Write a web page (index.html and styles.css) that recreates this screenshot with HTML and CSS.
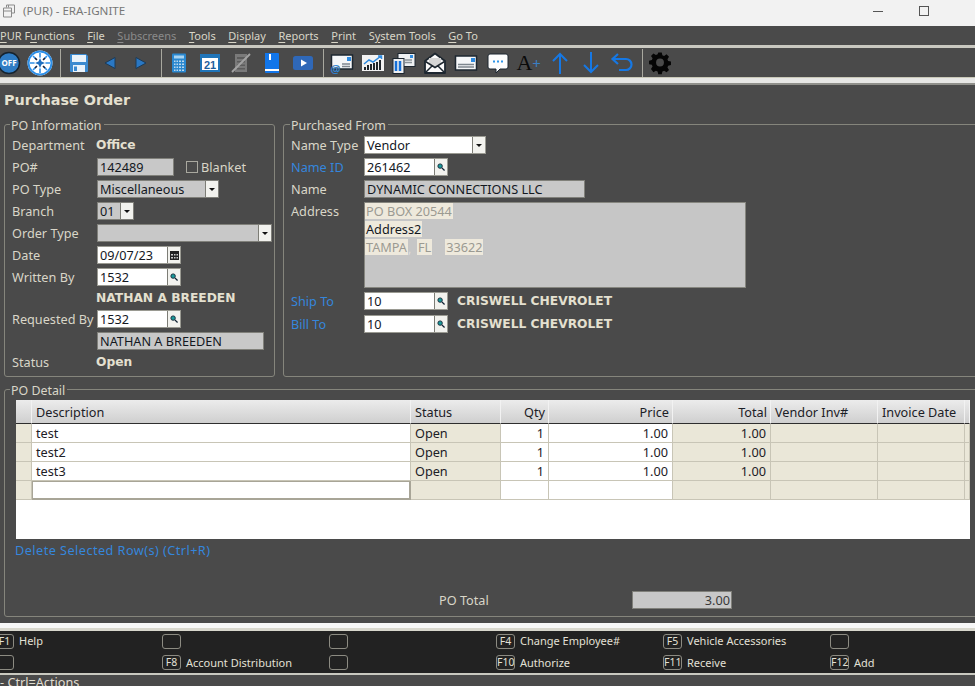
FILE: index.html
```html
<!DOCTYPE html>
<html lang="en">
<head>
<meta charset="utf-8">
<title>(PUR) - ERA-IGNITE</title>
<link rel="stylesheet" href="styles.css">
</head>
<body>
<header class="titlebar">
  <svg class="app-icon" width="14" height="14" viewBox="0 0 14 14"><path d="M4.5 3.5V1h8v8H10M1.5 4h8v9h-8zM1.5 7h8M6.5 1v2.500" fill="none" stroke="#8a8a8a"/></svg>
  <span class="app-title">(PUR) - ERA-IGNITE</span>
  <div class="win-buttons">
    <span class="win-min"></span>
    <span class="win-max"></span>
  </div>
</header>
<nav class="menu">
  <span><u>P</u>UR F<u>u</u>nctions</span><span><u>F</u>ile</span><span class="off"><u>S</u>ubscreens</span><span><u>T</u>ools</span><span><u>D</u>isplay</span><span><u>R</u>eports</span><span><u>P</u>rint</span><span>S<u>y</u>stem Tools</span><span><u>G</u>o To</span>
</nav>
<div class="toolbar">
  <div class="tool-group first">
    <span class="tool"><svg width="24" height="24" viewBox="0 0 24 24"><circle cx="12" cy="12" r="10.500" fill="#2f7cc4" stroke="#16232e" stroke-width="1.500"/><text x="12" y="15" class="svg-off">OFF</text></svg></span>
    <span class="tool"><svg width="26" height="26" viewBox="0 0 26 26"><circle cx="13" cy="13" r="12.500" fill="#fff"/><circle cx="13" cy="13" r="11.500" fill="none" stroke="#2d8fe8" stroke-width="2"/><path d="M13 3v20M3 13h20M6 6l14 14M20 6L6 20" stroke="#2d8fe8" stroke-width="1.600"/><circle cx="13" cy="13" r="5.500" fill="#fff"/><path d="M13 8l1.500 3.500L18 13l-3.500 1.500L13 18l-1.500-3.500L8 13l3.500-1.500z" fill="#1f6fc0"/><path d="M8 8l2 2M18 8l-2 2M8 18l2-2M18 18l-2-2" stroke="#223" stroke-width="1.500"/></svg></span>
  </div>
  <i class="sep"></i>
  <div class="tool-group">
    <span class="tool"><svg width="24" height="24" viewBox="0 0 24 24"><path d="M4 3h15l2 2v15a1 1 0 0 1-1 1H4a1 1 0 0 1-1-1V4a1 1 0 0 1 1-1z" fill="#3b8ad0"/><rect x="5" y="4" width="14" height="7" fill="#e9f2fa"/><rect x="6" y="14" width="12" height="7" fill="#e9f2fa"/><rect x="7" y="15.500" width="3" height="4.500" fill="#3b8ad0"/></svg></span>
    <span class="tool"><svg width="24" height="24" viewBox="0 0 24 24"><path d="M17 6.500v11L7 12z" fill="#2a78c4" stroke="#1a3a58"/></svg></span>
    <span class="tool"><svg width="24" height="24" viewBox="0 0 24 24"><path d="M7 6.500v11L17 12z" fill="#2a78c4" stroke="#1a3a58"/></svg></span>
  </div>
  <i class="sep"></i>
  <div class="tool-group">
    <span class="tool"><svg width="24" height="24" viewBox="0 0 24 24"><rect x="5" y="2.500" width="14" height="19" rx="1" fill="#2a88d0"/><rect x="7" y="4.500" width="10" height="3" fill="#a8d4f2"/><path d="M7 9.500h10v1.500H7zM7 12.500h10V14H7zM7 15.500h10V17H7zM7 18.500h10V20H7z" fill="#bcd8ee"/><path d="M9 9v11M11.500 9v11M14.500 9v11" stroke="#2a88d0" stroke-width="1"/></svg></span>
    <span class="tool"><svg width="24" height="24" viewBox="0 0 24 24"><rect x="2" y="3" width="20" height="18" fill="#1f74b8"/><rect x="4" y="7" width="16" height="12" fill="#fff"/><text x="12" y="17.500" class="svg-cal">21</text></svg></span>
    <span class="tool"><svg width="24" height="24" viewBox="0 0 24 24"><rect x="6" y="3" width="12" height="18" fill="#7a7a7a"/><path d="M8 6h8v2H8zM8 10h8v1.500H8zM8 13.500h8V15H8zM8 17h8v1.500H8z" fill="#5c5c5c"/><path d="M3 21L21 3" stroke="#a3a3a3" stroke-width="2"/></svg></span>
    <span class="tool"><svg width="24" height="24" viewBox="0 0 24 24"><path d="M5 2h13a1 1 0 0 1 1 1v19H6a1 1 0 0 1-1-1z" fill="#1276ea"/><rect x="5" y="18" width="14" height="2" fill="#fff"/><rect x="9" y="3" width="2" height="6" fill="#fff"/></svg></span>
    <span class="tool"><svg width="24" height="24" viewBox="0 0 24 24"><rect x="2" y="5" width="20" height="14" rx="2.500" fill="#2f68b8"/><path d="M10 8.500v7l6-3.500z" fill="#fff"/></svg></span>
  </div>
  <i class="sep"></i>
  <div class="tool-group wide">
    <span class="tool"><svg width="24" height="24" viewBox="0 0 24 24"><rect x="1.500" y="4" width="21" height="14" fill="#f4f6f8" stroke="#1d2730" stroke-width="1.500"/><rect x="17" y="6" width="4" height="4" fill="#2f8be0"/><path d="M12 13h8M12 15.500h8" stroke="#7d868e" stroke-width="1.300"/><text x="5.500" y="21.500" class="svg-at">@</text></svg></span>
    <span class="tool"><svg width="24" height="24" viewBox="0 0 24 24"><rect x="1" y="4" width="22" height="16" fill="#f2f2f2"/><path d="M4 19v-3M7 19v-5M10 19v-6M13 19v-7M16 19v-8M19 19V9" stroke="#20262c" stroke-width="2"/><path d="M3 13l5-4 4 2 8-6M17 5h3.500v3" fill="none" stroke="#2f8be0" stroke-width="1.500"/></svg></span>
    <span class="tool"><svg width="24" height="24" viewBox="0 0 24 24"><rect x="6" y="2.500" width="17" height="13" fill="#eef0f2" stroke="#1d2730"/><rect x="18" y="4" width="3" height="3" fill="#2f8be0"/><path d="M13 9h7M13 11.500h7" stroke="#8a9299" stroke-width="1.300"/><rect x="1" y="7.500" width="11" height="15" fill="#eef0f2" stroke="#1d2730"/><path d="M4 10v10M8 10v10" stroke="#1670d8" stroke-width="2.500"/></svg></span>
    <span class="tool"><svg width="24" height="24" viewBox="0 0 24 24"><path d="M2 10L12 2.500 22 10v12H2z" fill="#fbfbfb" stroke="#1d2730" stroke-width="1.800" stroke-linejoin="round"/><path d="M6 7h12v6l-6 3-6-3z" fill="#d6d6d6"/><path d="M2.500 10.500l9.500 6 9.500-6M2.500 21.500l7-7M21.500 21.500l-7-7" fill="none" stroke="#1d2730" stroke-width="1.500"/></svg></span>
    <span class="tool"><svg width="24" height="24" viewBox="0 0 24 24"><rect x="1.500" y="5" width="21" height="14" fill="#f4f6f8" stroke="#1d2730" stroke-width="1.500"/><rect x="17" y="7" width="4" height="4" fill="#2f8be0"/><path d="M4 13.500h16M4 16h16" stroke="#7d868e" stroke-width="1.500"/></svg></span>
    <span class="tool"><svg width="24" height="24" viewBox="0 0 24 24"><path d="M4 3h16a2 2 0 0 1 2 2v11a2 2 0 0 1-2 2h-6l-4 4v-4H4a2 2 0 0 1-2-2V5a2 2 0 0 1 2-2z" fill="#fdfdfd" stroke="#1d2730"/><path d="M7 10.500h2M11 10.500h2M15 10.500h2" stroke="#2f96ea" stroke-width="2"/></svg></span>
    <span class="tool tool-text"><span class="a-big">A</span><span class="a-plus">+</span></span>
    <span class="tool"><svg width="24" height="24" viewBox="0 0 24 24"><path d="M12 23V3M5 10l7-7 7 7" fill="none" stroke="#1678e4" stroke-width="2"/></svg></span>
    <span class="tool"><svg width="24" height="24" viewBox="0 0 24 24"><path d="M12 1v20M5 14l7 7 7-7" fill="none" stroke="#1678e4" stroke-width="2"/></svg></span>
    <span class="tool"><svg width="24" height="24" viewBox="0 0 24 24"><path d="M8 3L2.500 8 8 13M3 8h13a5.500 5.500 0 0 1 0 11h-7" fill="none" stroke="#1678e4" stroke-width="2.200"/></svg></span>
  </div>
  <i class="sep"></i>
  <div class="tool-group">
    <span class="tool"><svg width="24" height="24" viewBox="0 0 24 24"><path fill="#050505" fill-rule="evenodd" d="M10 1h4l.7 3.200 2 .8L19.500 3.200l2.800 2.800-1.800 2.800.8 2 3.200.700v4l-3.200.700-.8 2 1.800 2.800-2.800 2.800-2.800-1.800-2 .8-.7 3.200h-4l-.7-3.200-2-.8-2.800 1.800L1.700 20l1.800-2.800-.8-2L-.5 14.500v-4l3.200-.7.8-2L1.700 5l2.800-2.800 2.800 1.800 2-.8zM12 8a4.500 4.500 0 1 0 0 9 4.500 4.500 0 0 0 0-9z" transform="translate(.5 .5) scale(.875)"/></svg></span>
  </div>
</div>
<div class="toolbar-edge"></div>

<main class="content">
  <h1 class="page-title">Purchase Order</h1>
  <div class="top-panels">
    <fieldset class="panel panel-info">
      <legend>PO Information</legend>
      <div class="row"><span class="lbl">Department</span><strong class="val">Office</strong></div>
      <div class="row"><span class="lbl">PO#</span><span class="fld ro w-po">142489</span><span class="check"></span><span class="lbl-plain">Blanket</span></div>
      <div class="row"><span class="lbl">PO Type</span><span class="fld ro w-type">Miscellaneous<b class="drop"></b></span></div>
      <div class="row"><span class="lbl">Branch</span><span class="fld ro w-branch">01<b class="drop"></b></span></div>
      <div class="row"><span class="lbl">Order Type</span><span class="fld ro w-order"><b class="drop"></b></span></div>
      <div class="row"><span class="lbl">Date</span><span class="fld w-id">09/07/23<b class="btn"><svg width="9" height="9" viewBox="0 0 9 9"><path d="M0 0h9v9H0z" fill="#222"/><path d="M1 3h2v1.500H1zM4 3h1.500v1.500H4zM6.500 3h1.500v1.500H6.500zM1 6h2v1.500H1zM4 6h1.500v1.500H4zM6.500 6h1.500v1.500H6.500z" fill="#ccc"/></svg></b></span></div>
      <div class="row"><span class="lbl">Written By</span><span class="fld w-id">1532<b class="btn"><svg class="lens" viewBox="0 0 9 9"><circle cx="3.500" cy="3.500" r="2.500" fill="#1a9a9a" stroke="#123"/><path d="M5.500 5.500L8.500 8.500" stroke="#123" stroke-width="1.500"/></svg></b></span></div>
      <div class="row row-s"><span class="lbl"></span><strong class="val">NATHAN A BREEDEN</strong></div>
      <div class="row"><span class="lbl">Requested By</span><span class="fld w-id">1532<b class="btn"><svg class="lens" viewBox="0 0 9 9"><circle cx="3.500" cy="3.500" r="2.500" fill="#1a9a9a" stroke="#123"/><path d="M5.500 5.500L8.500 8.500" stroke="#123" stroke-width="1.500"/></svg></b></span></div>
      <div class="row row-m"><span class="lbl"></span><span class="fld ro w-req">NATHAN A BREEDEN</span></div>
      <div class="row row-m"><span class="lbl">Status</span><strong class="val">Open</strong></div>
    </fieldset>
    <fieldset class="panel panel-from">
      <legend>Purchased From</legend>
      <div class="row"><span class="lbl lbl-from">Name Type</span><span class="fld w-ntype">Vendor<b class="drop"></b></span></div>
      <div class="row"><span class="lbl lbl-from link">Name ID</span><span class="fld w-id">261462<b class="btn"><svg class="lens" viewBox="0 0 9 9"><circle cx="3.500" cy="3.500" r="2.500" fill="#1a9a9a" stroke="#123"/><path d="M5.500 5.500L8.500 8.500" stroke="#123" stroke-width="1.500"/></svg></b></span></div>
      <div class="row row-name"><span class="lbl lbl-from">Name</span><span class="fld ro w-name">DYNAMIC CONNECTIONS LLC</span></div>
      <div class="row-addr">
        <span class="lbl lbl-from lbl-addr">Address</span>
        <div class="addr">
          <div class="addr-line"><mark>PO BOX 20544</mark></div>
          <div class="addr-line"><mark class="dark">Address2</mark></div>
          <div class="addr-line"><mark>TAMPA</mark><span class="comma">,</span><mark>FL</mark><span class="addr-gap"></span><mark>33622</mark></div>
        </div>
      </div>
      <div class="row row-ship"><span class="lbl lbl-from link">Ship To</span><span class="fld w-id">10<b class="btn"><svg class="lens" viewBox="0 0 9 9"><circle cx="3.500" cy="3.500" r="2.500" fill="#1a9a9a" stroke="#123"/><path d="M5.500 5.500L8.500 8.500" stroke="#123" stroke-width="1.500"/></svg></b></span><strong class="val val-ship">CRISWELL CHEVROLET</strong></div>
      <div class="row row-bill"><span class="lbl lbl-from link">Bill To</span><span class="fld w-id">10<b class="btn"><svg class="lens" viewBox="0 0 9 9"><circle cx="3.500" cy="3.500" r="2.500" fill="#1a9a9a" stroke="#123"/><path d="M5.500 5.500L8.500 8.500" stroke="#123" stroke-width="1.500"/></svg></b></span><strong class="val val-ship">CRISWELL CHEVROLET</strong></div>
    </fieldset>
  </div>
  <fieldset class="panel panel-detail">
    <legend>PO Detail</legend>
    <div class="grid-wrap">
      <table class="grid">
        <colgroup><col class="c0"><col class="c1"><col class="c2"><col class="c3"><col class="c4"><col class="c5"><col class="c6"><col class="c7"><col class="c8"></colgroup>
        <thead><tr><th></th><th>Description</th><th>Status</th><th class="r">Qty</th><th class="r">Price</th><th class="r">Total</th><th>Vendor Inv#</th><th>Invoice Date</th><th></th></tr></thead>
        <tbody>
          <tr><td class="bg"></td><td>test</td><td class="bg">Open</td><td class="r">1</td><td class="r">1.00</td><td class="r bg">1.00</td><td class="bg"></td><td class="bg"></td><td class="bg"></td></tr>
          <tr><td class="bg"></td><td>test2</td><td class="bg">Open</td><td class="r">1</td><td class="r">1.00</td><td class="r bg">1.00</td><td class="bg"></td><td class="bg"></td><td class="bg"></td></tr>
          <tr><td class="bg"></td><td>test3</td><td class="bg">Open</td><td class="r">1</td><td class="r">1.00</td><td class="r bg">1.00</td><td class="bg"></td><td class="bg"></td><td class="bg"></td></tr>
          <tr><td class="bg"></td><td class="active"></td><td class="bg"></td><td></td><td></td><td class="bg"></td><td class="bg"></td><td class="bg"></td><td class="bg"></td></tr>
        </tbody>
      </table>
    </div>
    <a class="delete-link">Delete Selected Row(s) (Ctrl+R)</a>
    <div class="total-row"><span class="total-lbl">PO Total</span><span class="fld ro total-val">3.00</span></div>
  </fieldset>
</main>

<div class="band"></div>
<footer class="fkeys">
  <div class="fkey"><kbd>F1</kbd><span>Help</span></div>
  <div class="fkey"><kbd></kbd></div>
  <div class="fkey"><kbd></kbd></div>
  <div class="fkey"><kbd>F4</kbd><span>Change Employee#</span></div>
  <div class="fkey"><kbd>F5</kbd><span>Vehicle Accessories</span></div>
  <div class="fkey"><kbd></kbd></div>
  <div class="fkey"><kbd></kbd></div>
  <div class="fkey"><kbd>F8</kbd><span>Account Distribution</span></div>
  <div class="fkey"><kbd></kbd></div>
  <div class="fkey"><kbd>F10</kbd><span>Authorize</span></div>
  <div class="fkey"><kbd>F11</kbd><span>Receive</span></div>
  <div class="fkey"><kbd>F12</kbd><span>Add</span></div>
</footer>
<div class="status">- Ctrl=Actions</div>
</body>
</html>
```
FILE: styles.css
```css
* { box-sizing: border-box; }
html, body { margin: 0; height: 686px; overflow: hidden; }
body {
  width: 975px;
  display: flex;
  flex-direction: column;
  background: #4a4a4a;
  font: 12.7px/16px "Noto Sans", sans-serif;
  color: #d9d6c8;
}
.titlebar {
  flex: none;
  height: 26px;
  background: #f2f2f2;
  display: flex;
  align-items: center;
  padding: 0 0 4px 2px;
  color: #777;
  font-size: 11.6px;
}
.app-icon { margin-right: 7px; }
.win-buttons { margin-left: auto; display: flex; align-items: center; padding-right: 46px; gap: 36px; }
.win-min { width: 10px; height: 1px; background: #555; }
.win-max { width: 10px; height: 10px; border: 1px solid #555; }

.menu {
  flex: none;
  height: 19px;
  background: #4a4a4a;
  display: flex;
  gap: 12.6px;
  align-items: center;
  font-size: 11px;
  color: #d9d6c8;
  white-space: nowrap;
}
.menu .off { color: #8b8b8b; }
.menu u { text-underline-offset: 2px; }

.toolbar {
  flex: none;
  height: 32px;
  background: #4a4a4a;
  border-top: 3px solid #c9c8c0;
  display: flex;
  align-items: center;
  white-space: nowrap;
}
.tool-group { display: flex; }
.tool-group.first { margin-left: -6.5px; }
.tool { width: 31px; height: 28px; display: flex; align-items: center; justify-content: center; flex: none; }
.wide .tool { width: 31.2px; }
.sep { flex: none; width: 1px; height: 28px; background: #a9a89f; margin: 0 2px 0 4.500px; }
.tool-text { font-family: "Liberation Serif", serif; color: #0a0a0a; }
.a-big { font-size: 22px; line-height: 24px; }
.a-plus { font: 15px/20px "Noto Sans", sans-serif; color: #3a7fc4; }
.svg-off { font: 700 8px "Noto Sans", sans-serif; fill: #fff; text-anchor: middle; }
.svg-cal { font: 700 11px "Liberation Sans", sans-serif; fill: #1f5f9e; text-anchor: middle; }
.svg-at { font: 700 11px "Noto Sans", sans-serif; fill: #2f8be0; text-anchor: middle; stroke: #4a4a4a; stroke-width: .2px; }

.toolbar-edge {
  flex: none;
  height: 8px;
  background: #e6e6e4;
  border-top: 1px solid #c9c8b8;
  border-bottom: 2px solid #8f8f8a;
}

.content {
  flex: none;
  height: 538px;
  padding: 0 0 0 4px;
  overflow: hidden;
}
.page-title {
  margin: 0;
  height: 31px;
  padding-top: 6px;
  font: 700 14.4px/18px "DejaVu Sans", sans-serif;
  color: #e4e0d0;
}
.top-panels { display: flex; gap: 8px; height: 261px; }
.panel {
  margin: 0;
  min-width: 0;
  border: 1px solid #85857c;
  border-radius: 3px;
  padding: 1px 0 0 7px;
}
.panel legend {
  padding: 2px 2px 0 1px;
  margin-left: -1px;
  line-height: 15px;
  font-size: 12.4px;
  color: #d9d6c8;
}
.panel-info { width: 271px; flex: none; }
.panel-info legend { margin-left: -2px; }
.panel-from { width: 700px; flex: none; }
.panel-detail { width: 980px; height: 236px; margin-top: 4px; padding-left: 11px; }
.panel-detail legend { margin-left: -6px; }

.row { display: flex; align-items: center; height: 22px; white-space: nowrap; }
.row-s { height: 20px; }
.row-m { height: 21px; }
.row-name { height: 21px; }
.lbl { flex: none; width: 85px; }
.lbl-from { width: 73px; }
.lbl-addr { margin-top: 1px; }
.link { color: #3586dc; }
.val { font: 700 12.25px/16px "DejaVu Sans", sans-serif; color: #e4e0d0; margin-left: -1px; }
.val-ship { margin-left: 9px; }
.lbl-plain { margin-left: 3px; }

.fld {
  position: relative;
  display: block;
  flex: none;
  height: 18px;
  padding: 0 0 0 2px;
  background: #fff;
  border: 1px solid #9a9a92;
  line-height: 16px;
  color: #14181f;
  white-space: nowrap;
  overflow: hidden;
}
.fld.ro { background: #c8c8c8; border-color: #80807a; }
.w-po { width: 77px; }
.w-type { width: 122px; }
.w-branch { width: 37px; }
.w-order { width: 175px; }
.w-id { width: 84px; }
.w-req { width: 167px; }
.w-ntype { width: 122px; }
.w-name { width: 221px; }

.check { width: 12px; height: 12px; border: 1px solid #a9a89f; margin-left: 12px; flex: none; }

.drop, .btn {
  position: absolute;
  right: 0;
  top: 0;
  bottom: 0;
  width: 13px;
  background: #f2f2ee;
  border-left: 1px solid #7d7d76;
  display: flex;
  align-items: center;
  justify-content: center;
}
.drop::after {
  content: "";
  border-left: 3px solid transparent;
  border-right: 3px solid transparent;
  border-top: 3px solid #111;
}
.lens { width: 8px; height: 8px; }

.row-addr { display: flex; height: 90px; padding-top: 3px; }
.addr {
  width: 382px;
  height: 86px;
  background: #c6c6c6;
  border: 1px solid #86867f;
  padding: 0;
  line-height: 18px;
}
.addr-line { display: flex; height: 18px; }
.addr mark { background: #eee9dc; color: #9b9a92; padding: 0 1px; height: 16px; line-height: 16px; }
.addr mark.dark { color: #14181f; }
.comma { width: 9px; color: #ddd; }
.addr-gap { width: 13px; }
.row-ship { height: 23px; }
.row-bill { height: 23px; }

.grid-wrap {
  width: 954px;
  height: 139px;
  margin-top: 1px;
  background: #fff;
  overflow: hidden;
}
.grid { border-collapse: separate; border-spacing: 0; table-layout: fixed; width: 954px; line-height: 16px; color: #1c2026; }
.c0 { width: 16px; } .c1 { width: 379px; } .c2 { width: 90px; } .c3 { width: 48px; } .c4 { width: 124px; }
.c5 { width: 98px; } .c6 { width: 107px; } .c7 { width: 87px; } .c8 { width: 5px; }
.grid th {
  height: 24px;
  padding: 0 3px 0 4px;
  font-weight: 400;
  text-align: left;
  background: linear-gradient(#ececec, #cfcfcf);
  border-right: 1px solid #f2f2f2;
  border-bottom: 1px solid #2e2e2e;
  overflow: hidden;
  white-space: nowrap;
}
.grid td {
  height: 19px;
  padding: 0 4px;
  border-right: 1px solid #c8c5b6;
  border-bottom: 1px solid #c8c5b6;
  overflow: hidden;
}
.grid .r { text-align: right; }
.grid td.bg { background: #eae7d8; }
.grid td.active { border: 1px solid #a8a597; border-width: 1px 2px 2px 1px; }

.delete-link { display: block; margin: 3px 0 0 -1px; height: 16px; color: #3586dc; letter-spacing: .45px; }
.total-row { display: flex; align-items: center; margin-top: 33px; padding-left: 423px; }
.total-lbl { width: 193px; }
.total-val { width: 100px; padding-right: 1px; text-align: right; color: #3a3a3a; }

.band {
  flex: none;
  height: 8px;
  background: #f7f7f7;
  border-bottom: 3px solid #d8d7cd;
}
.fkeys {
  flex: none;
  height: 44px;
  background: #222;
  border-bottom: 2px solid #c9c9c0;
  padding: 2px 0 0;
  display: grid;
  grid-template-columns: repeat(6, 167px);
  grid-auto-rows: 21.5px;
  font-size: 11px;
  color: #e2e0d6;
  white-space: nowrap;
  overflow: hidden;
}
.fkey { display: flex; align-items: center; gap: 5px; height: 16px; margin-left: -5px; }
.fkey kbd {
  flex: none;
  width: 19px;
  height: 15px;
  border: 1px solid #8c8b82;
  border-radius: 3px;
  font: 10.5px/13px "Noto Sans", sans-serif;
  text-align: center;
  color: #e2e0d6;
  overflow: hidden;
}
.status { flex: none; height: 20px; margin-top: -1px; font-size: 12.7px; line-height: 16px; color: #e0ddd0; }
```
